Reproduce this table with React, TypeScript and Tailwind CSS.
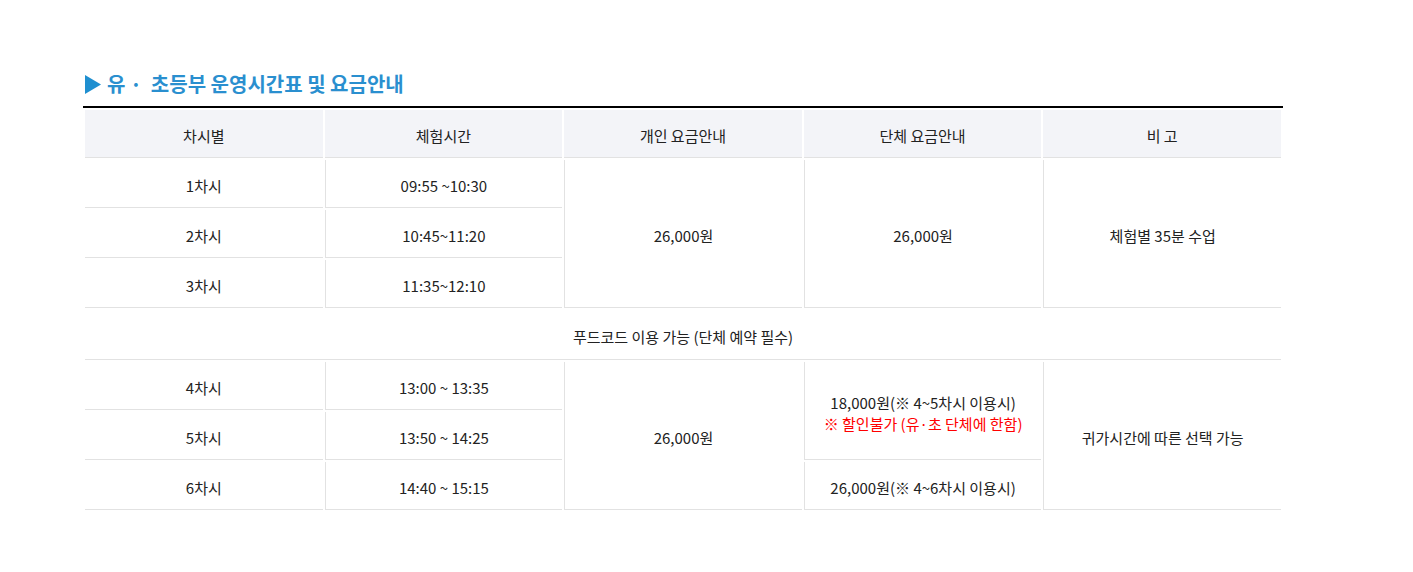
import React from "react";

const td = "border-b border-[#e2e2e2] text-center align-middle h-[48px] p-0 pt-[5px]";
const tdL = "border-b border-l border-[#e2e2e2] text-center align-middle h-[48px] p-0 pt-[5px]";

export default function App() {
  return (
    <div
      className="w-[1413px] h-[572px] bg-white text-[#222] text-[15px]"
      style={{ fontFamily: '"Noto Sans CJK KR", "Noto Sans", sans-serif' }}
    >
      <div className="pt-[70px] pl-[83px] w-[1283px]">
        <h2 className="flex items-center h-[28px] text-[20px] font-bold text-[#2a8fcf] leading-none pl-[2px]">
          <svg width="16" height="19" viewBox="0 0 16 19" className="mr-[6px] mt-[1px]">
            <polygon points="0,0 16,9.5 0,19" fill="#1f8fd0" />
          </svg>
          <span>유 ·&nbsp; 초등부 운영시간표 및 요금안내</span>
        </h2>
        <table
          className="mt-[8px] w-[1200px] border-t-2 border-black table-fixed"
          style={{ borderCollapse: "separate", borderSpacing: "2px" }}
        >
          <thead>
            <tr className="bg-[#f3f4f8]">
              <th className={`${td} font-normal h-[47px]`}>차시별</th>
              <th className={`${td} font-normal h-[47px]`}>체험시간</th>
              <th className={`${td} font-normal h-[47px]`}>개인 요금안내</th>
              <th className={`${td} font-normal h-[47px]`}>단체 요금안내</th>
              <th className={`${td} font-normal h-[47px]`}>비 고</th>
            </tr>
          </thead>
          <tbody>
            <tr>
              <td className={td}>1차시</td>
              <td className={tdL}>09:55 ~10:30</td>
              <td className={tdL} rowSpan={3}>26,000원</td>
              <td className={tdL} rowSpan={3}>26,000원</td>
              <td className={tdL} rowSpan={3}>체험별 35분 수업</td>
            </tr>
            <tr>
              <td className={td}>2차시</td>
              <td className={tdL}>10:45~11:20</td>
            </tr>
            <tr>
              <td className={td}>3차시</td>
              <td className={tdL}>11:35~12:10</td>
            </tr>
            <tr>
              <td className="border-b border-[#e2e2e2] text-center align-middle h-[50px] p-0 pt-[5px]" colSpan={5}>
                푸드코드 이용 가능 (단체 예약 필수)
              </td>
            </tr>
            <tr>
              <td className={td}>4차시</td>
              <td className={tdL}>13:00 ~ 13:35</td>
              <td className={tdL} rowSpan={3}>26,000원</td>
              <td className={`${tdL} leading-[21px]`} rowSpan={2}>
                18,000원(※ 4~5차시 이용시)
                <br />
                <span className="text-[#ff0000]">※ 할인불가 (유·초 단체에 한함)</span>
              </td>
              <td className={tdL} rowSpan={3}>귀가시간에 따른 선택 가능</td>
            </tr>
            <tr>
              <td className={td}>5차시</td>
              <td className={tdL}>13:50 ~ 14:25</td>
            </tr>
            <tr>
              <td className={td}>6차시</td>
              <td className={tdL}>14:40 ~ 15:15</td>
              <td className={tdL}>26,000원(※ 4~6차시 이용시)</td>
            </tr>
          </tbody>
        </table>
      </div>
    </div>
  );
}
